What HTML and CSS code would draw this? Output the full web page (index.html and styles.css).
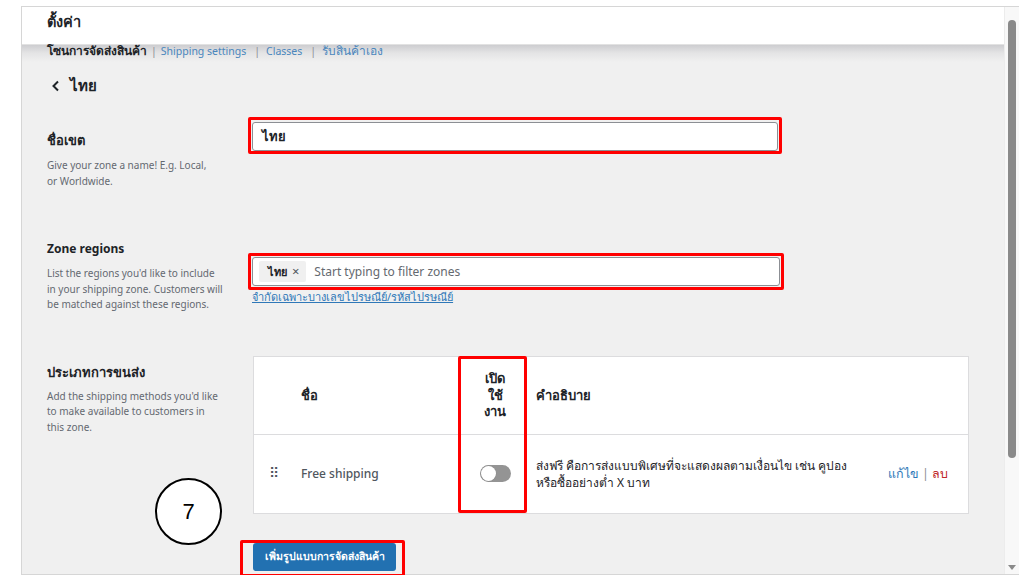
FILE: index.html
```html
<!DOCTYPE html>
<html lang="th">
<head>
<meta charset="utf-8">
<link rel="stylesheet" href="styles.css">
</head>
<body>
<div class="frame">
  <div class="page">
    <div class="topbar">ตั้งค่า</div>
    <div class="content">
      <nav class="tabs">
        <b class="th">โซนการจัดส่งสินค้า</b><span class="sep">|</span><a>Shipping settings</a><span class="sep sep-w">|</span><a>Classes</a><span class="sep sep-w">|</span><a class="th">รับสินค้าเอง</a>
      </nav>
      <div class="back">
        <svg class="chev" viewBox="0 0 10 12" width="10" height="12"><path d="M7 1.5 L2.5 6 L7 10.5" fill="none" stroke="#1d2327" stroke-width="2"/></svg>
        <span>ไทย</span>
      </div>

      <section class="row row1">
        <div class="lbl">
          <h3 class="th">ชื่อเขต</h3>
          <p>Give your zone a name! E.g. Local,<br>or Worldwide.</p>
        </div>
        <div class="field">
          <div class="hl hl-in1"><div class="input">ไทย</div></div>
        </div>
      </section>

      <section class="row row2">
        <div class="lbl">
          <h3>Zone regions</h3>
          <p>List the regions you'd like to include<br>in your shipping zone. Customers will<br>be matched against these regions.</p>
        </div>
        <div class="field">
          <div class="hl hl-in2">
            <div class="input input2"><span class="chip">ไทย <span class="x">×</span></span><span class="ph">Start typing to filter zones</span></div>
          </div>
          <a class="postcode">จำกัดเฉพาะบางเลขไปรษณีย์/รหัสไปรษณีย์</a>
        </div>
      </section>

      <section class="row row3">
        <div class="lbl">
          <h3 class="th">ประเภทการขนส่ง</h3>
          <p>Add the shipping methods you'd like<br>to make available to customers in<br>this zone.</p>
        </div>
        <div class="field">
          <div class="table">
            <div class="tr thead">
              <div class="td c-handle"></div>
              <div class="td c-name">ชื่อ</div>
              <div class="td c-en">เปิด<br>ใช้<br>งาน</div>
              <div class="td c-desc">คำอธิบาย</div>
              <div class="td c-act"></div>
            </div>
            <div class="tr tbody">
              <div class="td c-handle"><span class="grip">⠿</span></div>
              <div class="td c-name name">Free shipping</div>
              <div class="td c-en"><span class="toggle"><span class="knob"></span></span></div>
              <div class="td c-desc desc">ส่งฟรี คือการส่งแบบพิเศษที่จะแสดงผลตามเงื่อนไข เช่น คูปอง<br>หรือซื้ออย่างต่ำ X บาท</div>
              <div class="td c-act"><a class="edit">แก้ไข</a><span class="bar">|</span><a class="del">ลบ</a></div>
            </div>
            <div class="colmark"></div>
          </div>
        </div>
      </section>

      <div class="btnrow">
        <span class="hl hl-btn"><button class="primary">เพิ่มรูปแบบการจัดส่งสินค้า</button></span>
      </div>
    </div>
  </div>
  <div class="scrollbar">
    <div class="thumb"></div>
    <div class="arrow"></div>
  </div>
  <div class="step">7</div>
</div>
</body>
</html>
```

FILE: styles.css
```css
html, body {
  margin: 0;
  padding: 0;
  background: #ffffff;
}
body {
  font-family: "Noto Sans", "Open Sans", "DejaVu Sans", sans-serif;
  color: #1d2327;
}
.frame {
  position: relative;
  margin: 6px 0 0 21px;
  width: 996px;
  height: 567px;
  border: 1px solid #d6d6d6;
  display: flex;
}
.page {
  flex: 1;
  display: flex;
  flex-direction: column;
  background: #f0f0f0;
}
.topbar {
  height: 38px;
  box-sizing: border-box;
  background: #fff;
  padding: 3px 25px 0;
  font-size: 14.5px;
  font-weight: 700;
  line-height: 22px;
  border-bottom: 1px solid #e2e2e2;
}
.content {
  flex: 1;
  position: relative;
  background: linear-gradient(#cdcdd0 0, #e4e4e5 8px, #f0f0f0 17px);
}
.tabs {
  padding: 0 25px;
  font-size: 10.5px;
  line-height: 14px;
  margin-top: -1px;
  color: #2271b1;
}
.tabs .th {
  font-size: 12px;
}
.tabs b {
  color: #1d2327;
}
.tabs a {
  color: #4a86bd;
}
.tabs .sep {
  color: #8c8f94;
  margin: 0 4px;
}
.tabs .sep-w {
  margin: 0 6px 0 8px;
}
.back {
  display: flex;
  align-items: center;
  gap: 9px;
  padding-left: 29px;
  margin-top: 18px;
  height: 20px;
  font-size: 15px;
  font-weight: 700;
}
.row {
  display: flex;
  padding-left: 25px;
}
.lbl {
  width: 205px;
  flex: none;
}
.lbl h3 {
  margin: 0;
  font-size: 12px;
  line-height: 18px;
  font-weight: 700;
}
.lbl h3.th {
  font-size: 13px;
}
.lbl p {
  margin: 8px 0 0;
  font-size: 10px;
  line-height: 15.5px;
  color: #646970;
}
.field {
  flex: 1;
  padding-right: 35px;
}
.row1 {
  margin-top: 21px;
}
.row1 .lbl {
  padding-top: 14px;
}
.row1 .lbl p {
  margin-top: 9px;
}
.row1 .field {
  padding-top: 5px;
}
.row2 {
  margin-top: 51px;
}
.row2 .field {
  padding-top: 17px;
}
.row3 {
  margin-top: 43px;
}
.row3 .lbl {
  padding-top: 7px;
}
.row3 .field {
  padding-left: 1px;
}
.hl {
  position: relative;
  display: block;
}
.hl::after {
  content: "";
  position: absolute;
  border: 3px solid #ff0000;
  border-radius: 2px;
  pointer-events: none;
}
.hl-in1 {
  width: 526px;
}
.hl-in1::after {
  left: -4px;
  right: -4px;
  top: -5px;
  bottom: -3px;
}
.hl-in2 {
  width: 528px;
}
.hl-in2::after {
  left: -4px;
  right: -4px;
  top: -4px;
  bottom: -4px;
}
.input {
  box-sizing: border-box;
  height: 29px;
  background: #fff;
  border: 1px solid #8c8f94;
  border-radius: 3px;
  padding: 0 9px;
  font-size: 13px;
  font-weight: 700;
  line-height: 27px;
}
.input2 {
  display: flex;
  align-items: center;
  gap: 8px;
  padding: 0 6px;
  font-weight: 400;
}
.chip {
  background: #f0f0f0;
  height: 21px;
  line-height: 21px;
  padding: 0 7px 0 9px;
  font-size: 11px;
  font-weight: 700;
  border-radius: 2px;
}
.chip .x {
  font-weight: 400;
  color: #50575e;
  font-size: 13px;
  margin-left: 2px;
}
.ph {
  color: #646970;
  font-size: 12px;
}
.postcode {
  display: block;
  margin-top: 4px;
  font-size: 11px;
  line-height: 14px;
  color: #2f78b8;
  text-decoration: underline;
}
.table {
  position: relative;
  width: 716px;
  background: #fff;
  border: 1px solid #dcdcde;
  box-sizing: border-box;
}
.tr {
  display: flex;
  align-items: center;
}
.thead {
  height: 77px;
  border-bottom: 1px solid #dcdcde;
  font-size: 13px;
  font-weight: 700;
}
.tbody {
  height: 78px;
  font-size: 12px;
}
.c-handle {
  width: 35px;
  box-sizing: border-box;
  flex: none;
  padding-left: 15px;
}
.c-name {
  width: 160px;
  flex: none;
  padding-left: 12px;
}
.c-en {
  width: 68px;
  flex: none;
  text-align: center;
  line-height: 16.5px;
}
.c-desc {
  width: 330px;
  flex: none;
  padding-left: 7px;
}
.c-act {
  flex: 1;
  padding-left: 22px;
  font-size: 12.5px;
}
.grip {
  color: #50575e;
  font-size: 14px;
  font-family: "DejaVu Sans", sans-serif;
}
.name {
  color: #50575e;
  font-weight: 500;
}
.toggle {
  display: inline-block;
  position: relative;
  width: 31px;
  height: 17px;
  border-radius: 9px;
  background: #949494;
  vertical-align: middle;
}
.knob {
  position: absolute;
  left: 1px;
  top: 1px;
  width: 15px;
  height: 15px;
  border-radius: 50%;
  background: #fff;
  box-shadow: 0 0 0 0.5px #8c8c8c;
}
.desc {
  font-size: 12px;
  line-height: 17px;
}
.edit {
  color: #2f78b8;
}
.bar {
  color: #8c8f94;
  margin: 0 3px;
}
.del {
  color: #c0282a;
}
.colmark {
  position: absolute;
  left: 204px;
  top: -1px;
  width: 69px;
  height: 157px;
  box-sizing: border-box;
  border: 3px solid #ff0000;
  border-radius: 2px;
}
.btnrow {
  padding-left: 231px;
  margin-top: 29px;
}
.hl-btn {
  display: inline-block;
}
.hl-btn::after {
  left: -13px;
  right: -9px;
  top: -3px;
  bottom: -6px;
}
.primary {
  display: block;
  height: 28px;
  width: 143px;
  border: none;
  border-radius: 3px;
  background: #2271b1;
  color: #fff;
  font-family: inherit;
  font-size: 10.5px;
  font-weight: 700;
  padding: 0;
}
.scrollbar {
  position: relative;
  width: 14px;
  flex: none;
  background: #f8f8f8;
  border-left: 1px solid #ececec;
}
.thumb {
  position: absolute;
  left: 3px;
  top: 13px;
  width: 8px;
  height: 438px;
  border-radius: 4px;
  background: #8a8a8a;
}
.arrow {
  position: absolute;
  left: 3px;
  bottom: 4px;
  width: 0;
  height: 0;
  border-left: 4px solid transparent;
  border-right: 4px solid transparent;
  border-top: 5px solid #8a8a8a;
}
.step {
  position: absolute;
  left: 133px;
  top: 471px;
  width: 67px;
  height: 67px;
  box-sizing: border-box;
  border: 2px solid #000;
  border-radius: 50%;
  background: #fff;
  display: flex;
  align-items: center;
  justify-content: center;
  font-family: "Liberation Sans", Arial, sans-serif;
  font-size: 22px;
  color: #000;
}
```
